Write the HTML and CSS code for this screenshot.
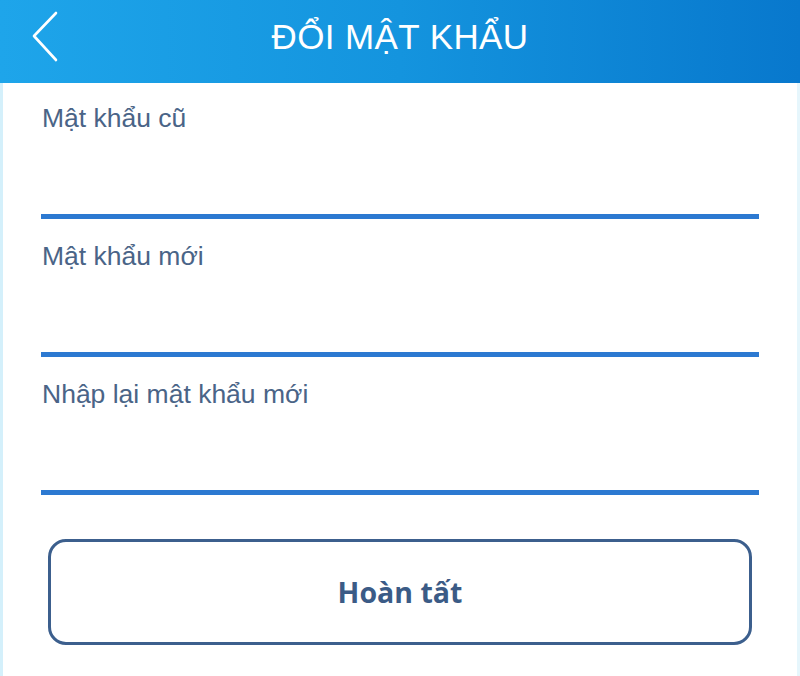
FILE: index.html
```html
<!DOCTYPE html>
<html lang="vi">
<head>
<meta charset="utf-8">
<title>Đổi mật khẩu</title>
<link rel="stylesheet" href="styles.css">
</head>
<body>
<div class="screen">
  <header class="topbar">
    <button class="back" aria-label="Quay lại">
      <svg width="30" height="54" viewBox="0 0 30 54"><path d="M25 3 L3 26 L25 50" fill="none" stroke="#ffffff" stroke-width="2.6" stroke-linecap="round" stroke-linejoin="round"/></svg>
    </button>
    <h1 class="title">ĐỔI MẬT KHẨU</h1>
  </header>
  <main class="form">
    <div class="field">
      <label class="label">Mật khẩu cũ</label>
      <div class="input"></div>
    </div>
    <div class="field">
      <label class="label">Mật khẩu mới</label>
      <div class="input"></div>
    </div>
    <div class="field">
      <label class="label">Nhập lại mật khẩu mới</label>
      <div class="input"></div>
    </div>
    <button class="submit">Hoàn tất</button>
  </main>
</div>
</body>
</html>
```
FILE: styles.css
```css
html, body {
  margin: 0;
  padding: 0;
  background: #ffffff;
}
.screen {
  width: 800px;
  height: 676px;
  overflow: hidden;
  font-family: "Liberation Sans", "Noto Sans", sans-serif;
  display: flex;
  flex-direction: column;
}
.topbar {
  height: 83px;
  flex: none;
  background: linear-gradient(90deg, #1ea5ea 0%, #1494de 50%, #0878cd 100%);
  display: flex;
  align-items: center;
  justify-content: center;
  position: relative;
}
.back {
  position: absolute;
  left: 31px;
  top: 10px;
  padding: 0;
  border: 0;
  background: none;
  width: 30px;
  height: 54px;
}
.back svg { display: block; }
.title {
  margin: 0 0 9px 0;
  font-weight: normal;
  color: #ffffff;
  font-size: 35px;
  letter-spacing: 0.4px;
}
.form {
  flex: 1;
  border-left: 3px solid #d4f0fb;
  border-right: 3px solid #e6f6fc;
  padding: 20px 38px 0 38px;
  display: flex;
  flex-direction: column;
}
.field {
  display: flex;
  flex-direction: column;
  margin-bottom: 22px;
}
.label {
  font-size: 26.5px;
  color: #4a6487;
  line-height: 30px;
  padding-left: 1px;
}
.input {
  height: 81px;
  border-bottom: 5px solid #2c79d1;
}
.submit {
  margin: 22px 7px 0 7px;
  height: 106px;
  border: 3px solid #3c5f8d;
  border-radius: 18px;
  background: #ffffff;
  color: #3b5b86;
  font-family: "Open Sans", "Liberation Sans", sans-serif;
  font-weight: bold;
  font-size: 28.5px;
}
```
